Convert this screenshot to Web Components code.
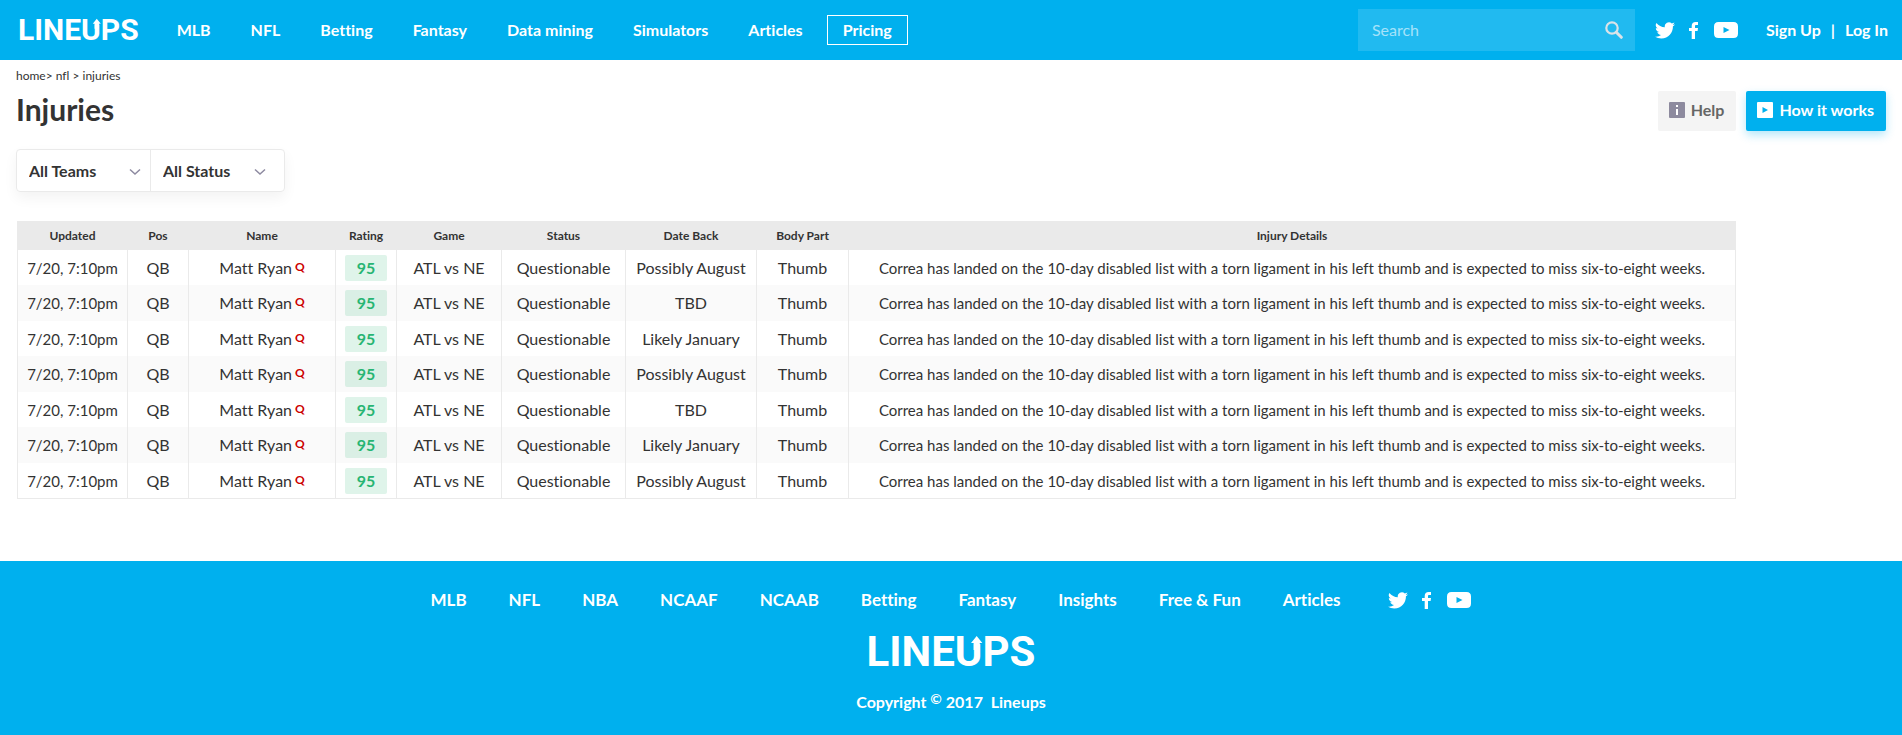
<!DOCTYPE html>
<html lang="en">
<head>
<meta charset="utf-8">
<meta name="viewport" content="width=device-width, initial-scale=1">
<title>NFL Injuries - Lineups</title>
<style>
:root { --brand: #00b0ee; --ink: #333; --line: #eaeaea; }
body { margin: 0; background: #fff; color: var(--ink); font: 400 16px/20px Lato, "Liberation Sans", sans-serif; font-variant-ligatures: none; }
</style>
</head>
<body>
<lineups-page></lineups-page>
<script>
const define = (name, html, setup) => {
  const template = document.createElement('template');
  template.innerHTML = html;
  customElements.define(name, class extends HTMLElement {
    connectedCallback() {
      if (this.shadowRoot) return;
      const root = this.attachShadow({ mode: 'open' });
      root.append(template.content.cloneNode(true));
      if (setup) setup(root, this);
    }
  });
};

define('brand-logo', `
<style>
:host { display: block; --size: 30px; }
:host([large]) { --size: 42px; }
a { display: block; color: #fff; text-decoration: none; font: 700 var(--size)/1 Roboto, "Liberation Sans", sans-serif; white-space: nowrap; }
.u { position: relative; display: inline-block; }
/* arrow head on the right arm of the U */
svg { position: absolute; right: -7%; top: 10%; width: 52%; height: 36%; }
.gap { fill: var(--brand); }
.arrow { fill: #fff; }
</style>
<a href="#" aria-label="Lineups">LINE<span class="u">U<svg viewBox="0 0 14 15" preserveAspectRatio="none" aria-hidden="true"><path class="gap" d="M1 0h11v9H1z"/><path class="arrow" d="M6.500 1 12 8H9.500v7h-6V8H1z"/></svg></span>PS</a>`);

define('social-links', `
<style>
:host { display: flex; align-items: center; color: #fff; }
a { display: block; color: inherit; }
a + a { margin-left: 14px; }
a:last-child { margin-left: 16px; }
svg { display: block; fill: currentColor; }
</style>
<a href="#" aria-label="Twitter"><svg width="20" height="17" viewBox="0 0 24 20"><path d="M24 2.4a9.8 9.8 0 0 1-2.8.8A4.900 4.900 0 0 0 23.300.5a9.900 9.900 0 0 1-3.100 1.200A4.900 4.900 0 0 0 11.800 6.100 14 14 0 0 1 1.700 1a4.900 4.900 0 0 0 1.500 6.500A4.900 4.900 0 0 1 1 6.900a4.900 4.900 0 0 0 3.900 4.900 5 5 0 0 1-2.200.1 4.900 4.900 0 0 0 4.600 3.400A9.900 9.900 0 0 1 0 17.400 14 14 0 0 0 7.500 19.600c9.100 0 14.300-7.700 14-14.600A10 10 0 0 0 24 2.400z"/></svg></a>
<a href="#" aria-label="Facebook"><svg width="9" height="17" viewBox="0 0 9 17"><path d="M9 .1V3H7.400C6.200 3 6 3.500 6 4.300V6h3l-.4 3H6v8H2.700V9H0V6h2.700V3.900C2.700 1.300 4.200 0 6.600 0z"/></svg></a>
<a href="#" aria-label="YouTube"><svg width="24" height="16" viewBox="0 0 24 16"><path fill-rule="evenodd" d="M4.500 0h15Q24 0 24 4.500v7Q24 16 19.500 16h-15Q0 16 0 11.500v-7Q0 0 4.500 0zM9.500 5v6l6-3z"/></svg></a>`);

define('search-box', `
<style>
:host { display: block; width: 277px; }
form { display: flex; align-items: center; height: 42px; box-sizing: border-box; padding: 0 12px 0 14px; background: rgba(255,255,255,.13); }
input { flex: 1; min-width: 0; padding: 0; border: 0; outline: 0; background: none; color: #fff; font: inherit; }
input::placeholder { color: #a5e2fa; opacity: 1; }
button { display: block; padding: 0; border: 0; background: none; }
svg { display: block; }
</style>
<form role="search"><input type="search" placeholder="Search" aria-label="Search"><button type="button" aria-label="Search"><svg width="18" height="18" viewBox="0 0 18 18" fill="none" stroke="#dbe3e8"><circle cx="7" cy="7" r="5.700" stroke-width="2.200"/><path d="m11.300 11.300 5 5" stroke-width="3" stroke-linecap="round"/></svg></button></form>`);

define('site-header', `
<style>
:host { display: flex; align-items: center; height: 60px; box-sizing: border-box; padding: 0 14px 0 18px; background: var(--brand); color: #fff; font-weight: 700; }
nav { display: flex; align-items: center; gap: 40px; margin-left: 38px; }
a { color: inherit; text-decoration: none; white-space: nowrap; }
.boxed { margin-left: -16px; border: 1px solid #fff; padding: 4px 15px; }
search-box { margin-left: auto; font-weight: 400; }
social-links { margin: 0 28px 0 20px; }
.account { display: flex; gap: 10px; }
</style>
<brand-logo></brand-logo>
<nav aria-label="Main"><a href="#">MLB</a><a href="#">NFL</a><a href="#">Betting</a><a href="#">Fantasy</a><a href="#">Data mining</a><a href="#">Simulators</a><a href="#">Articles</a><a class="boxed" href="#">Pricing</a></nav>
<search-box></search-box>
<social-links></social-links>
<div class="account"><a href="#">Sign Up</a><span>|</span><a href="#">Log In</a></div>`);

define('action-button', `
<style>
:host { display: block; }
button { display: flex; align-items: center; gap: 6px; height: 40px; padding: 0 12px 2px 11px; border: 0; border-radius: 2px; background: #f4f4f4; color: #666; font: inherit; font-weight: 700; white-space: nowrap; }
:host([primary]) button { background: var(--brand); color: #fff; box-shadow: 0 4px 10px rgba(0,174,239,.3); }
</style>
<button type="button"><slot name="icon"></slot><slot></slot></button>`);

define('filter-select', `
<style>
:host { display: block; position: relative; width: 133px; }
select { appearance: none; display: block; width: 100%; height: 41px; padding: 0 0 0 12px; border: 0; background: none; color: var(--ink); font: inherit; font-weight: 700; }
svg { position: absolute; right: 9px; top: 18px; pointer-events: none; }
:host([last]) svg { right: 18px; }
</style>
<select></select><svg width="12" height="8" viewBox="0 0 12 8" fill="none" stroke="#8d8aa0" stroke-width="1.500"><path d="m1 1.500 5 4.500 5-4.500"/></svg>`,
(root, host) => {
  const select = root.querySelector('select');
  select.setAttribute('aria-label', host.getAttribute('label'));
  select.add(new Option(host.getAttribute('value')));
});

define('filter-bar', `
<style>
:host { display: flex; width: max-content; border: 1px solid var(--line); border-radius: 4px; box-shadow: 0 6px 14px rgba(0,0,0,.05); }
filter-select + filter-select { border-left: 1px solid var(--line); }
</style>
<filter-select label="Team" value="All Teams"></filter-select><filter-select last label="Status" value="All Status"></filter-select>`);

define('injury-table', `
<style>
:host { display: block; overflow-x: auto; }
table { border-collapse: separate; border-spacing: 0; table-layout: auto; border: 1px solid var(--line); border-top: 0; white-space: nowrap; }
th { height: 29px; padding: 0; background: var(--line); font-size: 12px; line-height: 16px; font-weight: 700; }
td { height: 35px; padding: 0; text-align: center; }
th + th, td + td { border-left: 1px solid var(--line); }
td:first-child, td:last-child { font-size: 15px; }
tr:nth-child(even) td { height: 36px; background: #fafafa; }
b { display: block; width: 42px; margin: 0 auto; border-radius: 2px; background: rgba(39,181,115,.15); color: #27b573; line-height: 26px; font-weight: 700; }
sup { margin-left: 3px; color: #c00; font-size: 12px; line-height: 12px; font-weight: 700; vertical-align: 3px; }
</style>
<table>
<colgroup><col style="width:109px"><col style="width:61px"><col style="width:147px"><col style="width:61px"><col style="width:105px"><col style="width:124px"><col style="width:131px"><col style="width:92px"><col style="width:887px"></colgroup>
<thead><tr><th scope="col">Updated</th><th scope="col">Pos</th><th scope="col">Name</th><th scope="col">Rating</th><th scope="col">Game</th><th scope="col">Status</th><th scope="col">Date Back</th><th scope="col">Body Part</th><th scope="col">Injury Details</th></tr></thead>
<tbody></tbody>
</table>`,
root => {
  const body = root.querySelector('tbody');
  const dates = ['Possibly August', 'TBD', 'Likely January', 'Possibly August', 'TBD', 'Likely January', 'Possibly August'];
  body.innerHTML = dates.map(back => `<tr><td>7/20, 7:10pm</td><td>QB</td><td>Matt Ryan<sup>Q</sup></td><td><b>95</b></td><td>ATL vs NE</td><td>Questionable</td><td>${back}</td><td>Thumb</td><td>Correa has landed on the 10-day disabled list with a torn ligament in his left thumb and is expected to miss six-to-eight weeks.</td></tr>`).join('');
});

define('site-footer', `
<style>
:host { display: flex; flex-direction: column; align-items: center; padding: 28px 0 22px; background: var(--brand); color: #fff; line-height: 22px; font-weight: 700; }
nav { display: flex; align-items: center; justify-content: center; flex-wrap: wrap; gap: 42px; font-size: 17px; }
a { color: inherit; text-decoration: none; }
social-links { margin-left: 6px; }
brand-logo { margin-top: 20px; }
p { margin: 18px 0 0; white-space: pre; }
sup { font-size: 14px; line-height: 14px; vertical-align: 4px; }
</style>
<nav aria-label="Footer"><a href="#">MLB</a><a href="#">NFL</a><a href="#">NBA</a><a href="#">NCAAF</a><a href="#">NCAAB</a><a href="#">Betting</a><a href="#">Fantasy</a><a href="#">Insights</a><a href="#">Free &amp; Fun</a><a href="#">Articles</a><social-links></social-links></nav>
<brand-logo large></brand-logo>
<p>Copyright <sup>©</sup> 2017  Lineups</p>`);

define('lineups-page', `
<style>
:host { display: flex; flex-direction: column; min-height: 100vh; }
main { flex: 1; padding: 8px 16px 62px; }
.crumbs { font-size: 12px; line-height: 16px; }
.crumbs a { color: inherit; text-decoration: none; }
.top { display: flex; justify-content: space-between; align-items: flex-start; margin-top: 7px; }
h1 { margin: 0; font-size: 30px; line-height: 36px; font-weight: 700; }
.actions { display: flex; gap: 10px; }
filter-bar { margin-top: 18px; }
injury-table { margin: 29px 0 0 1px; }
svg { display: block; }
</style>
<site-header></site-header>
<main>
<nav class="crumbs" aria-label="Breadcrumb"><a href="#">home</a>&gt; <a href="#">nfl</a> &gt; <a href="#">injuries</a></nav>
<div class="top"><h1>Injuries</h1><div class="actions">
<action-button><svg slot="icon" width="16" height="16" viewBox="0 0 16 16"><rect width="16" height="16" rx="1" fill="#8d8a9e"/><path d="M7 3h2v2H7zM7 7h2v6H7z" fill="#fff"/></svg>Help</action-button>
<action-button primary><svg slot="icon" width="16" height="16" viewBox="0 0 16 16"><rect width="16" height="16" rx="1" fill="#fff"/><path d="m5.500 5 5.500 3-5.500 3z" fill="#00b0ee"/></svg>How it works</action-button>
</div></div>
<filter-bar></filter-bar>
<injury-table></injury-table>
</main>
<site-footer></site-footer>`);
</script>
</body>
</html>
